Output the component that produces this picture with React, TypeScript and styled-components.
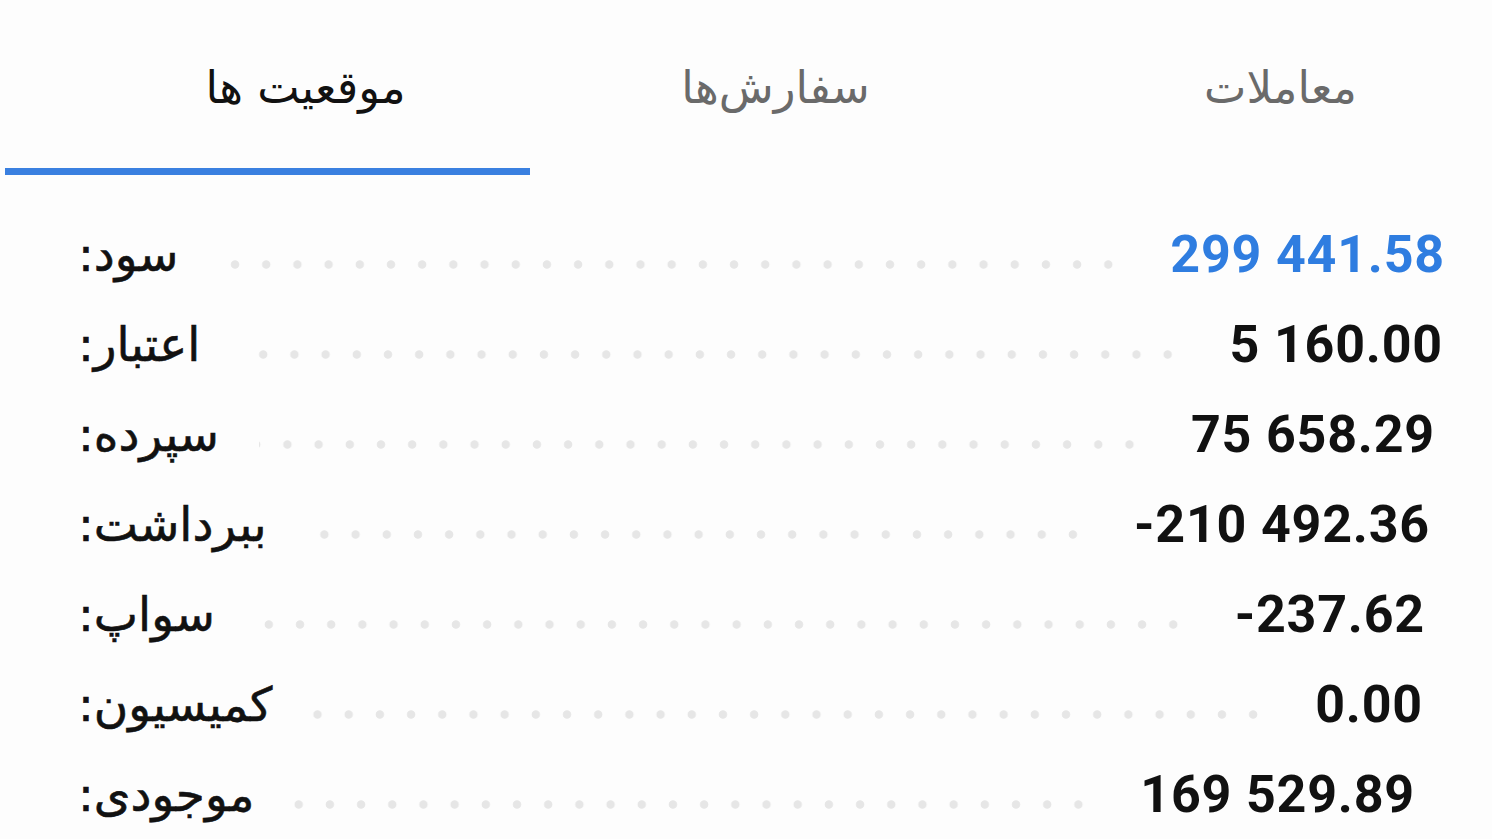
import styled, { createGlobalStyle } from 'styled-components';

const GlobalStyle = createGlobalStyle`
    html, body {
        margin: 0;
        padding: 0;
        background: #fdfdfd;
    }
    body {
        font-family: "DejaVu Sans", sans-serif;
        overflow: hidden;
    }
`;

const Page = styled.div`
    width: 1492px;
    height: 839px;
    background: #fdfdfd;
    display: flex;
    flex-direction: column;
`;

const TabBar = styled.div`
    display: grid;
    grid-template-columns: 525px 1fr 1fr;
    padding-left: 5px;
    height: 176px;
`;

const Tab = styled.div<{ $active?: boolean; $offset: number }>`
    box-sizing: border-box;
    display: flex;
    align-items: center;
    justify-content: center;
    padding-top: 6px;
    padding-left: ${p => p.$offset}px;
    border-bottom: 7px solid ${p => (p.$active ? '#3a80e0' : 'transparent')};
    direction: rtl;
    font-family: "DejaVu Sans", sans-serif;
    font-size: 45px;
    color: ${p => (p.$active ? '#111111' : '#6a6a6a')};
`;

const List = styled.div`
    display: flex;
    flex-direction: column;
    padding-top: 34px;
`;

const Row = styled.div<{ $inset: number }>`
    height: 90px;
    display: flex;
    align-items: center;
    padding-left: 78px;
    padding-right: ${p => p.$inset}px;
`;

const Label = styled.span`
    direction: rtl;
    font-family: "DejaVu Sans", sans-serif;
    font-size: 47px;
    color: #111111;
    white-space: nowrap;
    -webkit-text-stroke: 0.6px #111111;
`;

const Dots = styled.div`
    flex: 1;
    height: 9px;
    margin: 20px 46px 0 40px;
    background-image: radial-gradient(circle, #e6e6e6 3.8px, transparent 4.6px);
    background-size: 31.2px 9px;
    background-repeat: repeat-x;
    background-position: right center;
`;

const Value = styled.span<{ $accent?: boolean }>`
    font-family: Roboto, "Liberation Sans", sans-serif;
    font-weight: 700;
    font-size: 52px;
    letter-spacing: 0.8px;
    color: ${p => (p.$accent ? '#2f7de0' : '#111111')};
    white-space: nowrap;
`;

const rows = [
    { label: 'سود:', value: '299 441.58', inset: 47, accent: true },
    { label: 'اعتبار:', value: '5 160.00', inset: 49 },
    { label: 'سپرده:', value: '75 658.29', inset: 57 },
    { label: 'ببرداشت:', value: '-210 492.36', inset: 62 },
    { label: 'سواپ:', value: '-237.62', inset: 67 },
    { label: 'کمیسیون:', value: '0.00', inset: 69 },
    { label: 'موجودی:', value: '169 529.89', inset: 77 },
];

function App() {
    return (
        <Page>
            <GlobalStyle />
            <TabBar>
                <Tab $active $offset={76}>موقعیت ها</Tab>
                <Tab $offset={10}>سفارش‌ها</Tab>
                <Tab $offset={58}>معاملات</Tab>
            </TabBar>
            <List>
                {rows.map(r => (
                    <Row key={r.label} $inset={r.inset}>
                        <Label>{r.label}</Label>
                        <Dots />
                        <Value $accent={r.accent}>{r.value}</Value>
                    </Row>
                ))}
            </List>
        </Page>
    );
}

export default App;
